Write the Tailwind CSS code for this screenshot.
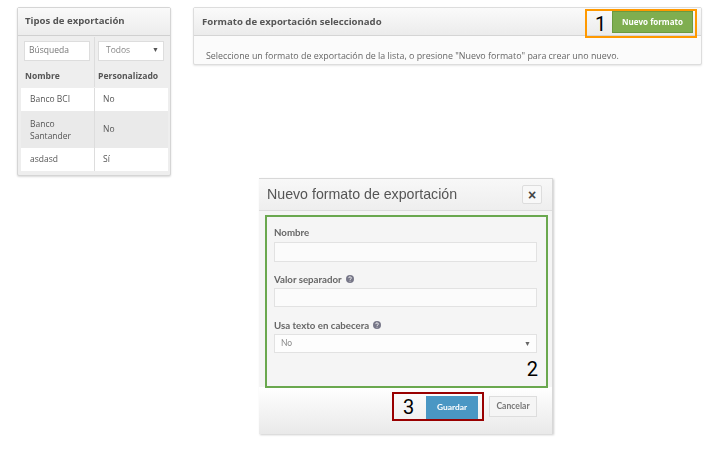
<!DOCTYPE html>
<html lang="es">
<head>
    <meta charset="UTF-8">
    <title>Formatos de exportación</title>
    <script src="https://cdn.jsdelivr.net/npm/@tailwindcss/browser@4"></script>
</head>
<body class="relative bg-white w-[710px] h-[449px] overflow-hidden [font-family:'Open_Sans',sans-serif] text-[#555]">
    <div class="flex items-start pt-[7px] pl-[17px] gap-[22px]">
        <!-- Tipos de exportacion -->
        <section class="w-[154px] h-[169px] border border-[#d5d5d5] rounded-[2px] bg-[#eeeeee] shadow-[0_1px_2px_rgba(0,0,0,0.15)] blur-[0.5px]">
            <h2 class="h-[28px] pl-[7px] flex items-center text-[9.6px] font-bold text-[#555] bg-gradient-to-b from-[#fafafa] to-[#ececec] border-b border-[#d0d0d0]">Tipos de exportación</h2>
            <div class="mx-[3px] mt-[1px] grid grid-cols-[74px_73px] text-[8.5px]">
                <div class="h-[27px] flex items-center pl-[3px] border-r border-[#ddd]">
                    <div class="w-[66px] h-[20px] bg-white border border-[#ddd] flex items-center pl-[4px] text-[#777]">Búsqueda</div>
                </div>
                <div class="h-[27px] flex items-center pl-[3px]">
                    <div class="w-[66px] h-[20px] bg-white border border-[#ddd] flex items-center justify-between pl-[7px] pr-[4px] text-[#888]">Todos <span class="text-[7px] text-[#555]">▼</span></div>
                </div>
                <div class="h-[23px] pl-[4px] pt-[1px] flex items-center font-bold text-[#555] border-r border-[#ddd]">Nombre</div>
                <div class="h-[23px] pt-[1px] flex items-center pl-[3px] font-bold text-[#555] text-[8.6px]">Personalizado</div>
                <div class="h-[23px] mt-[1px] flex items-center pl-[9px] bg-white border-r border-[#ddd]">Banco BCI</div>
                <div class="h-[23px] mt-[1px] flex items-center pl-[8px] bg-white">No</div>
                <div class="h-[37px] flex items-center pl-[9px] leading-[12px] bg-[#eaeaea] border-r border-[#ddd]">Banco<br>Santander</div>
                <div class="h-[37px] flex items-center pl-[8px] bg-[#eaeaea]">No</div>
                <div class="h-[23px] flex items-center pl-[9px] bg-white border-r border-[#ddd]">asdasd</div>
                <div class="h-[23px] flex items-center pl-[8px] bg-white">Sí</div>
            </div>
        </section>

        <!-- Formato seleccionado -->
        <section class="w-[509px] h-[58px] border border-[#ddd] rounded-[2px] bg-[#fbfbfb] shadow-[0_1px_2px_rgba(0,0,0,0.1)]">
            <div class="h-[28px] pl-[8px] flex items-center justify-between bg-gradient-to-b from-[#fafafa] to-[#ececec] border-b border-[#d5d5d5] blur-[0.5px]">
                <h2 class="text-[9.6px] font-bold text-[#555] mt-[1px]">Formato de exportación seleccionado</h2>
                <button class="mr-[8px] mt-[1px] w-[81px] h-[22px] bg-[#7fae50] border border-[#6a9a40] text-white text-[8px] font-bold">Nuevo formato</button>
            </div>
            <p class="pl-[12px] pt-[13px] text-[8.89px] text-[#666] blur-[0.4px]">Seleccione un formato de exportación de la lista, o presione "Nuevo formato" para crear uno nuevo.</p>
        </section>
    </div>

    <!-- Modal -->
    <div class="relative w-[294px] h-[256px] mt-[2px] ml-[259px] bg-[#f5f5f5] border-t border-r border-[#d8d8d8] shadow-[1px_1px_2px_rgba(0,0,0,0.2)]">
        <div class="h-[32px] pl-[8px] pr-[10px] flex items-center justify-between bg-gradient-to-b from-[#f8f8f8] to-[#eeeeee] border-b border-[#ddd]">
            <h3 class="[font-family:'Liberation_Sans',sans-serif] text-[14.2px] text-[#555] blur-[0.4px]">Nuevo formato de exportación</h3>
            <button class="w-[20px] h-[19px] bg-[#f8f8f8] border border-[#ddd] rounded-[2px] flex items-center justify-center text-[#444] text-[14px] font-bold leading-none [font-family:'Liberation_Sans',sans-serif]">×</button>
        </div>
        <form class="h-[176px] px-[15px] pt-[14px] [font-family:'Lato',sans-serif] text-[9.7px] font-bold text-[#666] blur-[0.4px]">
            <label class="block h-[17px] leading-[14px]">Nombre</label>
            <div class="h-[20px] mb-[10px] bg-[#fbfbfb] border border-[#e2e2e2]"></div>
            <label class="flex items-center gap-[4px] h-[16px] pb-[2px]">Valor separador
                <svg class="w-[8px] h-[8px]" viewBox="0 0 16 16"><circle cx="8" cy="8" r="8" fill="#778"/><path d="M5.5 6.2a2.5 2.5 0 1 1 3.6 2.2c-.8.4-1.1.8-1.1 1.6M8 11.5v1.6" stroke="#fff" stroke-width="1.8" fill="none"/></svg>
            </label>
            <div class="h-[19px] mb-[11px] bg-[#fbfbfb] border border-[#e2e2e2]"></div>
            <label class="flex items-center gap-[4px] h-[16px] pb-[2px]">Usa texto en cabecera
                <svg class="w-[8px] h-[8px]" viewBox="0 0 16 16"><circle cx="8" cy="8" r="8" fill="#778"/><path d="M5.5 6.2a2.5 2.5 0 1 1 3.6 2.2c-.8.4-1.1.8-1.1 1.6M8 11.5v1.6" stroke="#fff" stroke-width="1.8" fill="none"/></svg>
            </label>
            <div class="h-[19px] bg-[#fdfdfd] border border-[#e2e2e2] flex items-center justify-between pl-[6px] pr-[5px] font-normal text-[8.5px] text-[#888]">No <span class="text-[7px] text-[#666]">▼</span></div>
        </form>
        <div class="h-[47px] pt-[9px] pr-[15px] flex justify-end items-start gap-[11px] bg-gradient-to-b from-[#ffffff] to-[#e9e9e9] [font-family:'Lato',sans-serif] font-bold blur-[0.4px]">
            <button class="w-[52px] h-[23px] bg-[#4a97c4] text-white text-[8.4px]">Guardar</button>
            <button class="w-[48px] h-[21px] bg-[#f5f5f5] border border-[#ddd] text-[#777] text-[8.6px]">Cancelar</button>
        </div>

        <!-- Annotation boxes drawn over the modal -->
        <div class="absolute left-[6px] top-[36px] w-[283px] h-[173px] border-2 border-[#6aa84f]">
            <span class="absolute right-[8px] bottom-[7px] [font-family:'Roboto',sans-serif] text-[20px] leading-none text-black">2</span>
        </div>
        <div class="absolute left-[133px] top-[213px] w-[92px] h-[29px] border-2 border-[#990000]">
            <span class="absolute left-[9px] top-[3px] [font-family:'Roboto',sans-serif] text-[20px] leading-none text-black">3</span>
        </div>
    </div>

    <!-- Orange annotation over the top panel -->
    <div class="absolute left-[585px] top-[9px] w-[112px] h-[29px] border-2 border-[#f90]">
        <span class="absolute left-[8px] top-[3px] [font-family:'Roboto',sans-serif] text-[20px] leading-none text-black">1</span>
    </div>
</body>
</html>
